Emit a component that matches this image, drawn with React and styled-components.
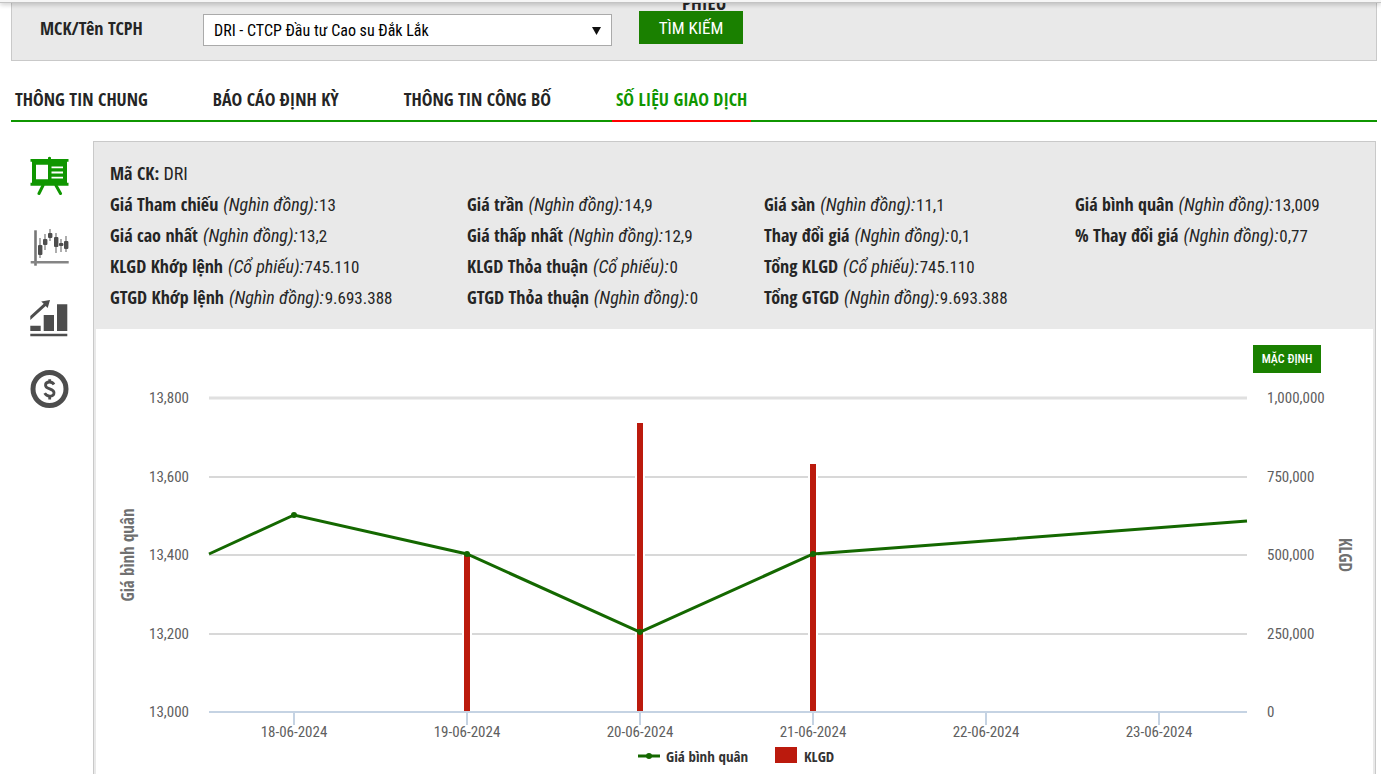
import React, { useState } from 'react';
import styled, { createGlobalStyle } from 'styled-components';

const GlobalStyle = createGlobalStyle`
  * {
    box-sizing: border-box;
  }
  body {
    margin: 0;
    background-color: #fff;
    color: #252525;
    font-family: 'Roboto Condensed', 'Roboto', sans-serif;
    font-size: 18px;
  }
  b, label {
    font-family: 'Open Sans Condensed', 'Open Sans', sans-serif;
    font-weight: bold;
  }
`;

const Page = styled.div`
  position: relative;
  padding: 0 4px 0 11px;
`;

const StickyBar = styled.header`
  position: absolute;
  top: 0;
  left: 0;
  right: 0;
  z-index: 2;
  height: 3px;
  background-color: #f6f6f6;
  border-bottom: 1px solid #c4c4c4;
  box-shadow: 0 1px 5px rgba(0, 0, 0, 0.3);
`;

const HiddenMenuItem = styled.b`
  position: absolute;
  top: -9px;
  left: 682px;
  font-size: 19px;
  line-height: 24px;
`;

const SearchPanel = styled.form`
  display: flex;
  align-items: flex-start;
  height: 61px;
  padding: 11px 28px 0;
  background-color: #e9e9e9;
  border: 1px solid #c9c9c9;
  border-top: 0;
`;

const SearchLabel = styled.label`
  width: 163px;
  line-height: 34px;
`;

const SelectBox = styled.div`
  position: relative;
  width: 409px;
  margin: 3px 27px 0 0;
`;

const Select = styled.select`
  display: block;
  width: 100%;
  height: 32px;
  padding: 0 10px;
  appearance: none;
  background-color: #fff;
  border: 1px solid #aaa;
  border-radius: 0;
  color: #000;
  font-family: inherit;
  font-size: 16px;
`;

const Arrow = styled.svg`
  position: absolute;
  top: 13px;
  right: 11px;
  pointer-events: none;
`;

const Button = styled.button`
  position: relative;
  width: ${props => (props.$small ? '68px' : '104px')};
  height: ${props => (props.$small ? '28px' : '33px')};
  padding: 0;
  background-color: #1a8000;
  border: 0;
  color: #fff;
  font-family: inherit;
  font-size: ${props => (props.$small ? '12px' : '17px')};
  font-weight: ${props => (props.$small ? 500 : 400)};
  cursor: pointer;
`;

const Tabs = styled.nav`
  display: flex;
  gap: 57px;
  height: 42px;
  margin-top: 19px;
  border-bottom: 2px solid #0f9600;
`;

const Tab = styled.a`
  height: 42px;
  padding: 0 4px;
  border-bottom: 2px solid ${props => (props.$active ? '#f00' : 'transparent')};
  color: ${props => (props.$active ? '#0f9600' : '#252525')};
  font-family: 'Open Sans Condensed', 'Open Sans', sans-serif;
  font-size: 18px;
  font-weight: bold;
  line-height: 38px;
  text-decoration: none;
  white-space: nowrap;
`;

const Content = styled.main`
  display: flex;
  align-items: flex-start;
  margin-top: 19px;
`;

const Sidebar = styled.nav`
  display: flex;
  flex: 0 0 82px;
  flex-direction: column;
  gap: 32px;
  padding: 15px 0 0 19px;
`;

const SideLink = styled.a`
  display: block;
  width: 39px;
  height: 39px;
  color: ${props => (props.$active ? '#0f9600' : '#4d4d4d')};

  svg {
    display: block;
  }
`;

const Panel = styled.section`
  flex: 1;
  min-width: 0;
  margin-right: 1px;
  background-color: #e9e9e9;
  border: 1px solid #c9c9c9;
  border-bottom: 0;
`;

const Info = styled.div`
  padding: 16px;
  padding-right: 0;
`;

const InfoGrid = styled.div`
  display: grid;
  grid-template-columns: 357fr 297fr 311fr 300fr;
`;

const InfoItem = styled.div`
  height: 31px;
  line-height: 31px;
  white-space: nowrap;

  i {
    margin-left: 5px;
  }
`;

const Value = styled.span`
  margin-left: 1px;
  font-size: 17px;
`;

const ChartBox = styled.div`
  margin: 0 2px;
  background-color: #fff;
`;

const ChartToolbar = styled.div`
  display: flex;
  justify-content: flex-end;
  height: 55px;
  padding: 16px 52px 0 0;
`;

const Chart = styled.svg`
  display: block;
  width: 100%;
  height: auto;
  font-size: 15px;
  fill: #606060;
`;

const AxisTitle = styled.text`
  font-family: 'Open Sans Condensed', 'Open Sans', sans-serif;
  font-size: 17px;
  font-weight: bold;
  text-anchor: middle;
  fill: #707070;
`;

const LegendText = styled.text`
  font-family: 'Open Sans Condensed', 'Open Sans', sans-serif;
  font-size: 15px;
  font-weight: bold;
  fill: #333;
`;

const tabs = ['THÔNG TIN CHUNG', 'BÁO CÁO ĐỊNH KỲ', 'THÔNG TIN CÔNG BỐ', 'SỐ LIỆU GIAO DỊCH'];

const stats = [
  ['Giá Tham chiếu', 'Nghìn đồng', '13'],
  ['Giá trần', 'Nghìn đồng', '14,9'],
  ['Giá sàn', 'Nghìn đồng', '11,1'],
  ['Giá bình quân', 'Nghìn đồng', '13,009'],
  ['Giá cao nhất', 'Nghìn đồng', '13,2'],
  ['Giá thấp nhất', 'Nghìn đồng', '12,9'],
  ['Thay đổi giá', 'Nghìn đồng', '0,1'],
  ['% Thay đổi giá', 'Nghìn đồng', '0,77'],
  ['KLGD Khớp lệnh', 'Cổ phiếu', '745.110'],
  ['KLGD Thỏa thuận', 'Cổ phiếu', '0'],
  ['Tổng KLGD', 'Cổ phiếu', '745.110'],
  null,
  ['GTGD Khớp lệnh', 'Nghìn đồng', '9.693.388'],
  ['GTGD Thỏa thuận', 'Nghìn đồng', '0'],
  ['Tổng GTGD', 'Nghìn đồng', '9.693.388'],
];

const axisRows = [
  { y: 14, left: '13,800', right: '1,000,000' },
  { y: 93, left: '13,600', right: '750,000' },
  { y: 171, left: '13,400', right: '500,000' },
  { y: 250, left: '13,200', right: '250,000' },
  { y: 328, left: '13,000', right: '0' },
];

const days = [
  { x: 198, date: '18-06-2024' },
  { x: 371, date: '19-06-2024' },
  { x: 544, date: '20-06-2024' },
  { x: 717, date: '21-06-2024' },
  { x: 890, date: '22-06-2024' },
  { x: 1063, date: '23-06-2024' },
];

const volumes = [
  { x: 371, y: 171 },
  { x: 544, y: 39 },
  { x: 717, y: 80 },
];

const prices = [
  { x: 198, y: 131 },
  { x: 371, y: 170 },
  { x: 544, y: 248 },
  { x: 717, y: 170 },
];

const candles = [
  { x: 10, wick: [11, 31], body: [18, 28] },
  { x: 15, wick: [7, 23], body: [12, 18] },
  { x: 20, wick: [2, 14], body: [6, 11] },
  { x: 26, wick: [6, 26], body: [10, 20] },
  { x: 31, wick: [12, 25], body: [16, 19] },
  { x: 36, wick: [9, 25], body: [14, 22] },
];

const BoardIcon = () => (
  <svg width="39" height="39" viewBox="0 0 39 39">
    <path
      fill="currentColor"
      fillRule="evenodd"
      d="M18 3V1.5q1.5-1.5 3 0V3h17.500v2.800H37V26.800h1.500v3H.5v-3H2V5.800H.5V3zM6 8.700v14.600h12V8.700z"
    />
    <path d="M21.500 11.300h11.500M21.500 16.500h11.500M21.500 21.700h11.500" stroke="#fff" strokeWidth="1.800" />
    <path d="M13 29.500L9 37.500M26 29.500l4.500 8" stroke="currentColor" strokeWidth="3" strokeLinecap="round" />
  </svg>
);

const CandleIcon = () => (
  <svg width="39" height="39" viewBox="0 0 39 39">
    <path d="M5.500 3.300v35.400" stroke="#777" strokeWidth="2.600" />
    <path d="M.7 35.300h38" stroke="#858585" strokeWidth="2.600" />
    {candles.map(({ x, wick, body }) => (
      <g key={x}>
        <path d={`M${x} ${wick[0]}V${wick[1]}`} stroke="#a5a5a5" strokeWidth="1.800" />
        <rect x={x - 2} y={body[0]} width="4.400" height={body[1] - body[0]} rx="1" fill="currentColor" />
      </g>
    ))}
  </svg>
);

const GrowthIcon = () => (
  <svg width="39" height="39" viewBox="0 0 39 39" fill="currentColor">
    <path d="M.3 27.700h10.400V33H.3zM13.700 17H24v16H13.700zM27 6.300h10.300V33H27zM.3 35.700h37v2.600H.3z" />
    <path d="M.3 18L13.700 5.800l-2.500-2.300L20 2l-2.300 8-2-2L.3 22z" />
  </svg>
);

const DollarIcon = () => (
  <svg width="39" height="39" viewBox="0 0 39 39" fill="none" stroke="currentColor">
    <circle cx="19.500" cy="20" r="16.500" strokeWidth="5" />
    <path d="M24 15.500c-1-1.700-2.600-2.500-4.500-2.500-2.500 0-4 1.300-4 3.200 0 4.600 8.500 2.800 8.500 7.500 0 2-1.700 3.400-4.300 3.400-2.300 0-4-1-5-2.900" strokeWidth="2.800" />
    <path d="M19.700 10.300v3M19.700 27v3.500" strokeWidth="2.800" />
  </svg>
);

const sideIcons = [
  { name: 'Tổng quan', Icon: BoardIcon },
  { name: 'Biểu đồ nến', Icon: CandleIcon },
  { name: 'Tăng trưởng', Icon: GrowthIcon },
  { name: 'Tài chính', Icon: DollarIcon },
];

const PriceChart = () => (
  <Chart viewBox="0 0 1277 390">
    {axisRows.map(({ y, left, right }, index) => (
      <g key={y}>
        {index < 4 && (
          <line x1="113" x2="1151" y1={y} y2={y} stroke={index ? '#d8d8d8' : '#e0e0e0'} strokeWidth={index ? 2 : 3} />
        )}
        <text x="93" y={y + 5} textAnchor="end">{left}</text>
        <text x="1171" y={y + 5}>{right}</text>
      </g>
    ))}
    {volumes.map(({ x, y }) => (
      <rect key={x} x={x - 4} y={y - 1} width="8" height={329 - y} fill="#bb1a0d" stroke="#fff" strokeWidth="2" />
    ))}
    <line x1="113" x2="1151" y1="328" y2="328" stroke="#c5d3e3" strokeWidth="2" />
    {days.map(({ x, date }) => (
      <g key={date}>
        <line x1={x} x2={x} y1="329" y2="341" stroke="#c5d3e3" strokeWidth="2" />
        <text x={x} y="353" textAnchor="middle">{date}</text>
      </g>
    ))}
    <path d="M113 170L198 131L371 170L544 248L717 170L1151 137" fill="none" stroke="#146800" strokeWidth="3" />
    {prices.map(({ x, y }) => (
      <circle key={x} cx={x} cy={y} r="3" fill="#146800" />
    ))}
    <AxisTitle transform="translate(38 171) rotate(-90)">Giá bình quân</AxisTitle>
    <AxisTitle transform="translate(1243 171) rotate(90)">KLGD</AxisTitle>
    <path d="M542 372h22" stroke="#146800" strokeWidth="3" />
    <circle cx="553" cy="372" r="3" fill="#146800" />
    <LegendText x="570" y="378">Giá bình quân</LegendText>
    <rect x="679" y="363" width="22" height="16" fill="#bb1a0d" />
    <LegendText x="708" y="378">KLGD</LegendText>
  </Chart>
);

const App = () => {
  const [activeTab, setActiveTab] = useState(3);

  return (
    <Page>
      <GlobalStyle />
      <StickyBar />
      <HiddenMenuItem>PHIẾU</HiddenMenuItem>
      <SearchPanel onSubmit={event => event.preventDefault()}>
        <SearchLabel htmlFor="company">MCK/Tên TCPH</SearchLabel>
        <SelectBox>
          <Select id="company">
            <option>DRI - CTCP Đầu tư Cao su Đắk Lắk</option>
          </Select>
          <Arrow width="9" height="8" viewBox="0 0 9 8">
            <path d="M0 0h9L4.500 8z" fill="#111" />
          </Arrow>
        </SelectBox>
        <Button type="submit">TÌM KIẾM</Button>
      </SearchPanel>
      <Tabs>
        {tabs.map((tab, index) => (
          <Tab key={tab} href="#" $active={index === activeTab} onClick={() => setActiveTab(index)}>
            {tab}
          </Tab>
        ))}
      </Tabs>
      <Content>
        <Sidebar>
          {sideIcons.map(({ name, Icon }, index) => (
            <SideLink key={name} href="#" aria-label={name} $active={index === 0}>
              <Icon />
            </SideLink>
          ))}
        </Sidebar>
        <Panel>
          <Info>
            <InfoItem><b>Mã CK:</b> DRI</InfoItem>
            <InfoGrid>
              {stats.map((stat, index) => (
                <InfoItem key={index}>
                  {stat && (
                    <>
                      <b>{stat[0]}</b><i>({stat[1]}):</i><Value>{stat[2]}</Value>
                    </>
                  )}
                </InfoItem>
              ))}
            </InfoGrid>
          </Info>
          <ChartBox>
            <ChartToolbar>
              <Button type="button" $small>MẶC ĐỊNH</Button>
            </ChartToolbar>
            <PriceChart />
          </ChartBox>
        </Panel>
      </Content>
    </Page>
  );
};

export default App;
